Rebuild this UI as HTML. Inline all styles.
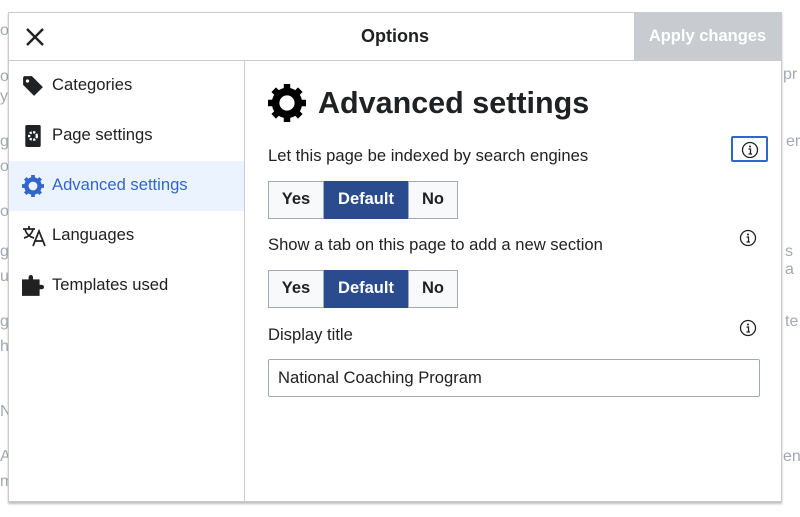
<!DOCTYPE html>
<html><head><meta charset="utf-8"><style>
*{box-sizing:border-box;margin:0;padding:0}
body{width:800px;height:517px;overflow:hidden;background:#fff;font-family:"Liberation Sans",sans-serif;color:#202122;position:relative}
.bg{position:absolute;color:#a2a9b1;font-size:16px}
.dlg{position:absolute;left:8px;top:12px;width:774px;height:490px;background:#fff;border:1px solid #c8ccd1;box-shadow:0 2px 2px rgba(0,0,0,.25)}
.hd{position:absolute;left:0;top:0;width:772px;height:48px;border-bottom:1px solid #c8ccd1}
.title{position:absolute;left:0;width:772px;top:13px;text-align:center;font-weight:bold;font-size:18px}
.apply{position:absolute;right:0;top:0;width:147px;height:47px;background:#c8ccd1;color:#fff;font-weight:bold;font-size:16.5px;text-align:center;line-height:47px}
.side{position:absolute;left:0;top:48px;width:236px;height:440px;border-right:1px solid #c8ccd1}
.it{position:absolute;left:0;width:235px;height:50px;font-size:16.6px;line-height:48px;padding-left:43px}
.it svg{position:absolute;left:13px;top:14px}
.sel{background:#eaf3ff;color:#3366cc}
.main{position:absolute;left:259px;top:48px}
h1{position:absolute;left:50px;top:25px;font-size:30.5px;white-space:nowrap;font-weight:bold}
.lab{position:absolute;left:0;font-size:16.6px;white-space:nowrap}
.grp{position:absolute;left:0;height:38px;display:flex;border-radius:2px}
.grp div{border:1px solid #a2a9b1;background:#f8f9fa;font-weight:bold;font-size:16.5px;text-align:center;line-height:35px}
.grp .on{background:#2a4b8d;border-color:#2a4b8d;color:#fff}
.inp{position:absolute;left:0;top:298px;width:492px;height:38px;border:1px solid #a2a9b1;border-radius:2px;font-size:16.6px;padding-left:9px;line-height:36px}
.info{position:absolute}
</style></head><body>
<div class="bg" style="left:0;top:22px">or</div>
<div class="bg" style="left:0;top:68px">ov</div>
<div class="bg" style="left:0;top:88px">ys</div>
<div class="bg" style="left:0;top:133px">g</div>
<div class="bg" style="left:0;top:158px">or</div>
<div class="bg" style="left:0;top:203px">og</div>
<div class="bg" style="left:0;top:243px">g</div>
<div class="bg" style="left:0;top:268px">u</div>
<div class="bg" style="left:0;top:313px">g</div>
<div class="bg" style="left:0;top:338px">h</div>
<div class="bg" style="left:0;top:403px">N</div>
<div class="bg" style="left:0;top:448px">Al</div>
<div class="bg" style="left:0;top:473px">m</div>
<div class="bg" style="left:783px;top:66px">pr</div>
<div class="bg" style="left:786px;top:133px">er</div>
<div class="bg" style="left:785px;top:243px">s a</div>
<div class="bg" style="left:785px;top:313px">te</div>
<div class="bg" style="left:783px;top:448px">en</div>
<div class="dlg">
 <div class="hd">
  <svg style="position:absolute;left:17px;top:15px" width="18" height="18" viewBox="0 0 18 18"><path d="M1 1L17 17M17 1L1 17" stroke="#202122" stroke-width="2.4"/></svg>
  <div class="title">Options</div>
  <div class="apply">Apply changes</div>
 </div>
 <div class="side">
  <div class="it" style="top:0"><svg width="22" height="22" viewBox="0 0 20 20"><path d="M1 2v7l10 10 8-8L9 1H2zM5 4a1.5 1.5 0 110 3 1.5 1.5 0 010-3z" fill="#202122" fill-rule="evenodd"/></svg>Categories</div>
  <div class="it" style="top:50px"><svg width="22" height="22" viewBox="0 0 20 20"><rect x="3" y="0" width="14" height="20" rx="1.5" fill="#202122"/><circle cx="10" cy="10" r="3.5" fill="none" stroke="#fff" stroke-width="2.2" stroke-dasharray="2 1.3"/></svg>Page settings</div>
  <div class="it sel" style="top:100px"><svg width="22" height="22" viewBox="0 0 20 20"><circle cx="10" cy="10" r="6" fill="none" stroke="#3366cc" stroke-width="4"/><path d="M10 0v4M10 16v4M0 10h4M16 10h4M3 3l3 3M14 14l3 3M17 3l-3 3M6 14l-3 3" stroke="#3366cc" stroke-width="3.4"/></svg>Advanced settings</div>
  <div class="it" style="top:150px"><svg width="24" height="22" viewBox="0 0 24 22"><path d="M1 4h12M7 1v3M3 4c1 5 5 8 9 9M11 4c-1 5-5 8-9 9M11 21l6-15 6 15M13.5 16h7" stroke="#202122" stroke-width="1.7" fill="none"/></svg>Languages</div>
  <div class="it" style="top:200px"><svg width="22" height="22" viewBox="0 0 20 20"><path d="M0 4h6V2a2 2 0 014 0v2h6v5h2a2 2 0 010 4h-2v6H0z" fill="#202122"/></svg>Templates used</div>
 </div>
 <div class="main">
  <svg style="position:absolute;left:0;top:23px" width="38" height="38" viewBox="0 0 20 20"><circle cx="10" cy="10" r="6" fill="none" stroke="#000" stroke-width="4"/><path d="M10 0v4M10 16v4M0 10h4M16 10h4M3 3l3 3M14 14l3 3M17 3l-3 3M6 14l-3 3" stroke="#000" stroke-width="3.4"/></svg>
  <h1>Advanced settings</h1>
  <div class="lab" style="top:85px">Let this page be indexed by search engines</div>
  <div class="info" style="left:463px;top:75px;width:37px;height:26px;border:2px solid #3366cc;border-radius:2px"><svg style="position:absolute;left:8px;top:3px" width="18" height="18" viewBox="0 0 18 18"><circle cx="9" cy="9" r="7.5" fill="none" stroke="#202122" stroke-width="1.3"/><path d="M7.5 8h2v5M7.5 13h3.5" stroke="#202122" stroke-width="1.3" fill="none"/><circle cx="9" cy="5.5" r="1" fill="#202122"/></svg></div>
  <div class="grp" style="top:120px"><div style="width:56px">Yes</div><div class="on" style="width:84px">Default</div><div style="width:50px">No</div></div>
  <div class="lab" style="top:174px">Show a tab on this page to add a new section</div>
  <svg class="info" style="left:471px;top:168px" width="18" height="18" viewBox="0 0 18 18"><circle cx="9" cy="9" r="7.5" fill="none" stroke="#202122" stroke-width="1.3"/><path d="M7.5 8h2v5M7.5 13h3.5" stroke="#202122" stroke-width="1.3" fill="none"/><circle cx="9" cy="5.5" r="1" fill="#202122"/></svg>
  <div class="grp" style="top:209px"><div style="width:56px">Yes</div><div class="on" style="width:84px">Default</div><div style="width:50px">No</div></div>
  <div class="lab" style="top:264px">Display title</div>
  <svg class="info" style="left:471px;top:258px" width="18" height="18" viewBox="0 0 18 18"><circle cx="9" cy="9" r="7.5" fill="none" stroke="#202122" stroke-width="1.3"/><path d="M7.5 8h2v5M7.5 13h3.5" stroke="#202122" stroke-width="1.3" fill="none"/><circle cx="9" cy="5.5" r="1" fill="#202122"/></svg>
  <div class="inp">National Coaching Program</div>
 </div>
</div>
</body></html>
